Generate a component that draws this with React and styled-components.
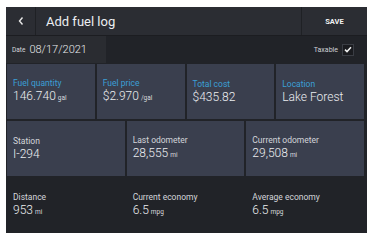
import React from "react";
import styled, { createGlobalStyle } from "styled-components";

const Global = createGlobalStyle`
  html, body { margin: 0; padding: 0; background: #ffffff; }
  body { font-family: Roboto, "Noto Sans", sans-serif; }
`;

const Page = styled.div`
  width: 381px;
  height: 242px;
  padding: 7px 14px 9px 6px;
  box-sizing: border-box;
`;

const Frame = styled.div`
  width: 361px;
  height: 226px;
  background: #212328;
  display: flex;
  flex-direction: column;
  color: #e4e5e8;
  overflow: hidden;
`;

const Header = styled.div`
  height: 29px;
  display: flex;
  background: #2b2d33;
  border-bottom: 1px solid #1c1d21;
  box-sizing: border-box;
`;

const Back = styled.div`
  width: 29px;
  display: flex;
  align-items: center;
  justify-content: center;
  border-right: 1px solid #1f2125;
`;

const Title = styled.div`
  flex: 1;
  display: flex;
  align-items: center;
  padding-left: 10px;
  font-size: 13px;
  color: #eceef1;
`;

const Save = styled.div`
  width: 65px;
  display: flex;
  align-items: center;
  justify-content: center;
  border-left: 1px solid #1f2125;
  font-size: 7.5px;
  font-weight: 700;
  color: #f2f2f2;
`;

const DateBar = styled.div`
  height: 27px;
  display: flex;
  align-items: center;
  justify-content: space-between;
`;

const DateBox = styled.div`
  width: 100px;
  height: 100%;
  background: #2a2c31;
  display: flex;
  align-items: center;
  padding-left: 6px;
  box-sizing: border-box;
  gap: 4px;
`;

const SmallLabel = styled.span`
  font-size: 6.5px;
  color: #d4d6da;
`;

const DateValue = styled.span`
  font-size: 11px;
  font-weight: 300;
  color: #e8e9ec;
`;

const Taxable = styled.div`
  display: flex;
  align-items: center;
  gap: 4px;
  padding-right: 13px;
  font-size: 7px;
  color: #cfd1d5;
`;

const Check = styled.div`
  width: 10px;
  height: 10px;
  background: #1a1b1f;
  border: 1px solid #3a3d44;
  display: flex;
  align-items: center;
  justify-content: center;
`;

const Grid = styled.div`
  display: grid;
  grid-template-columns: repeat(${(p) => p.$cols}, 1fr);
  gap: 2px;
  padding: ${(p) => p.$pad};
`;

const Card = styled.div`
  height: ${(p) => p.$h}px;
  background: ${(p) => (p.$flat ? "transparent" : "#3a3f4e")};
  padding: 0 6px;
  display: flex;
  flex-direction: column;
  justify-content: center;
  box-sizing: border-box;
`;

const Label = styled.div`
  font-size: 8.5px;
  color: ${(p) => (p.$blue ? "#3a9fd6" : "#d3d5da")};
  line-height: 11px;
`;

const Value = styled.div`
  font-size: 12px;
  font-weight: 300;
  color: #eceef1;
  line-height: 15px;
  white-space: nowrap;
`;

const Unit = styled.span`
  font-size: 6.5px;
  font-weight: 400;
  color: #d9dbdf;
  margin-left: 2px;
`;

const Field = ({ label, value, unit, blue, h, flat }) => (
  <Card $h={h} $flat={flat}>
    <Label $blue={blue}>{label}</Label>
    <Value>
      {value}
      {unit && <Unit>{unit}</Unit>}
    </Value>
  </Card>
);

export default function App() {
  return (
    <Page>
      <Global />
      <Frame>
        <Header>
          <Back>
            <svg width="8" height="10" viewBox="0 0 8 10">
              <path d="M5.5 1.5 L2.5 5 L5.5 8.5" fill="none" stroke="#e8e8e8" strokeWidth="1.4" />
            </svg>
          </Back>
          <Title>Add fuel log</Title>
          <Save>SAVE</Save>
        </Header>
        <DateBar>
          <DateBox>
            <SmallLabel>Date</SmallLabel>
            <DateValue>08/17/2021</DateValue>
          </DateBox>
          <Taxable>
            Taxable
            <Check>
              <svg width="8" height="7" viewBox="0 0 8 7">
                <path d="M1 3.6 L3 5.6 L7 1.2" fill="none" stroke="#f2f2f2" strokeWidth="1.5" />
              </svg>
            </Check>
          </Taxable>
        </DateBar>
        <Grid $cols={4} $pad="1px 3px 0 1px">
          <Field h={55} blue label="Fuel quantity" value="146.740" unit="gal" />
          <Field h={55} blue label="Fuel price" value="$2.970" unit="/gal" />
          <Field h={55} blue label="Total cost" value="$435.82" />
          <Field h={55} blue label="Location" value="Lake Forest" />
        </Grid>
        <Grid $cols={3} $pad="2px 3px 0 1px">
          <Field h={55} label="Station" value="I-294" />
          <Field h={55} label="Last odometer" value="28,555" unit="mi" />
          <Field h={55} label="Current odometer" value="29,508" unit="mi" />
        </Grid>
        <Grid $cols={3} $pad="10px 3px 0 1px">
          <Field flat h={40} label="Distance" value="953" unit="mi" />
          <Field flat h={40} label="Current economy" value="6.5" unit="mpg" />
          <Field flat h={40} label="Average economy" value="6.5" unit="mpg" />
        </Grid>
      </Frame>
    </Page>
  );
}
